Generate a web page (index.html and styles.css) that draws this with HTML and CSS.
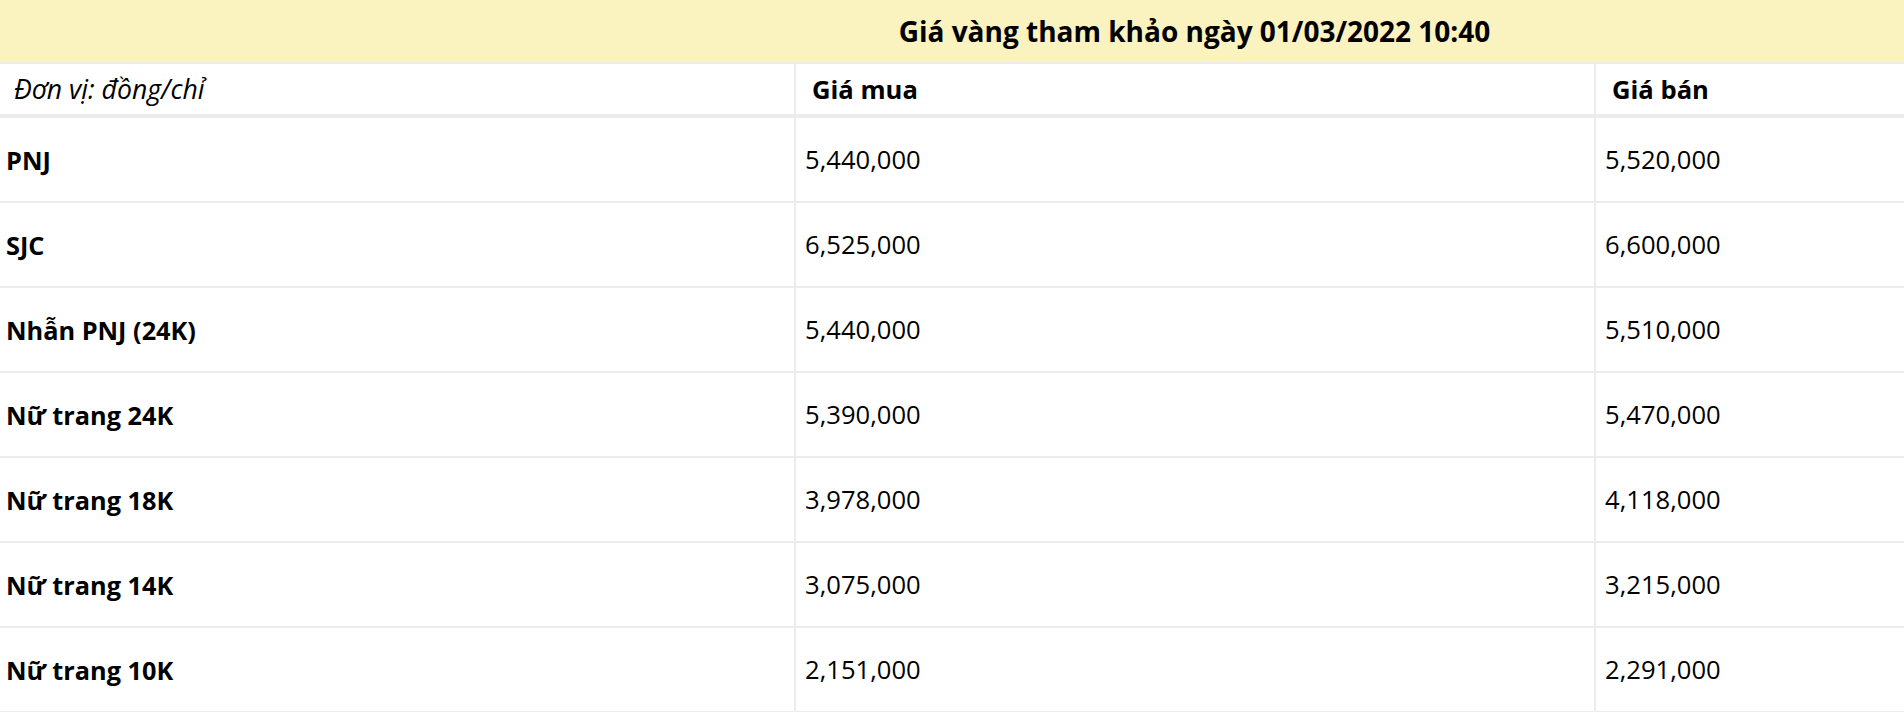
FILE: index.html
```html
<!DOCTYPE html>
<html lang="vi">
<head>
<meta charset="utf-8">
<title>Giá vàng</title>
<link rel="stylesheet" href="styles.css">
</head>
<body>
<div class="wrap">
<table class="gold">
  <colgroup>
    <col class="c1"><col class="c2"><col class="c3">
  </colgroup>
  <thead>
    <tr class="title-row"><th colspan="3">Giá vàng tham khảo ngày 01/03/2022 10:40</th></tr>
    <tr class="head-row">
      <th class="unit">Đơn vị: đồng/chỉ</th>
      <th>Giá mua</th>
      <th>Giá bán</th>
    </tr>
  </thead>
  <tbody>
    <tr><td class="name">PNJ</td><td>5,440,000</td><td>5,520,000</td></tr>
    <tr><td class="name">SJC</td><td>6,525,000</td><td>6,600,000</td></tr>
    <tr><td class="name">Nhẫn PNJ (24K)</td><td>5,440,000</td><td>5,510,000</td></tr>
    <tr><td class="name">Nữ trang 24K</td><td>5,390,000</td><td>5,470,000</td></tr>
    <tr><td class="name">Nữ trang 18K</td><td>3,978,000</td><td>4,118,000</td></tr>
    <tr><td class="name">Nữ trang 14K</td><td>3,075,000</td><td>3,215,000</td></tr>
    <tr><td class="name">Nữ trang 10K</td><td>2,151,000</td><td>2,291,000</td></tr>
  </tbody>
</table>
</div>
</body>
</html>
```
FILE: styles.css
```css
html, body {
  margin: 0;
  padding: 0;
  background: #fff;
}
body {
  font-family: "Open Sans", "Noto Sans", "Liberation Sans", sans-serif;
  color: #000;
  font-size: 25.6px;
}
.wrap {
  width: 100%;
  overflow: hidden;
}
.gold {
  border-collapse: collapse;
  table-layout: fixed;
  width: 2390px;
}
.c1 { width: 795px; }
.c2 { width: 800px; }
.c3 { width: 795px; }

.gold th, .gold td {
  padding: 0 9px;
  text-align: left;
  vertical-align: middle;
  border: 2px solid #ececec;
  border-left: none;
}
.gold th + th, .gold td + td { border-left: 2px solid #ececec; }

.title-row th {
  background: #faf2bf;
  height: 62px;
  padding: 0;
  text-align: center;
  font-weight: 700;
  font-size: 28px;
  border-top: none;
}
.head-row th {
  height: 50px;
  font-weight: 700;
  padding: 0 16px;
  border-bottom: 4px solid #ececec;
}
.head-row th.unit {
  font-style: italic;
  font-weight: 400;
  font-size: 26.6px;
  padding-left: 14px;
}
.gold td {
  height: 83px;
}
.gold td.name {
  font-weight: 700;
  font-size: 25.3px;
  padding-left: 6px;
}
```
